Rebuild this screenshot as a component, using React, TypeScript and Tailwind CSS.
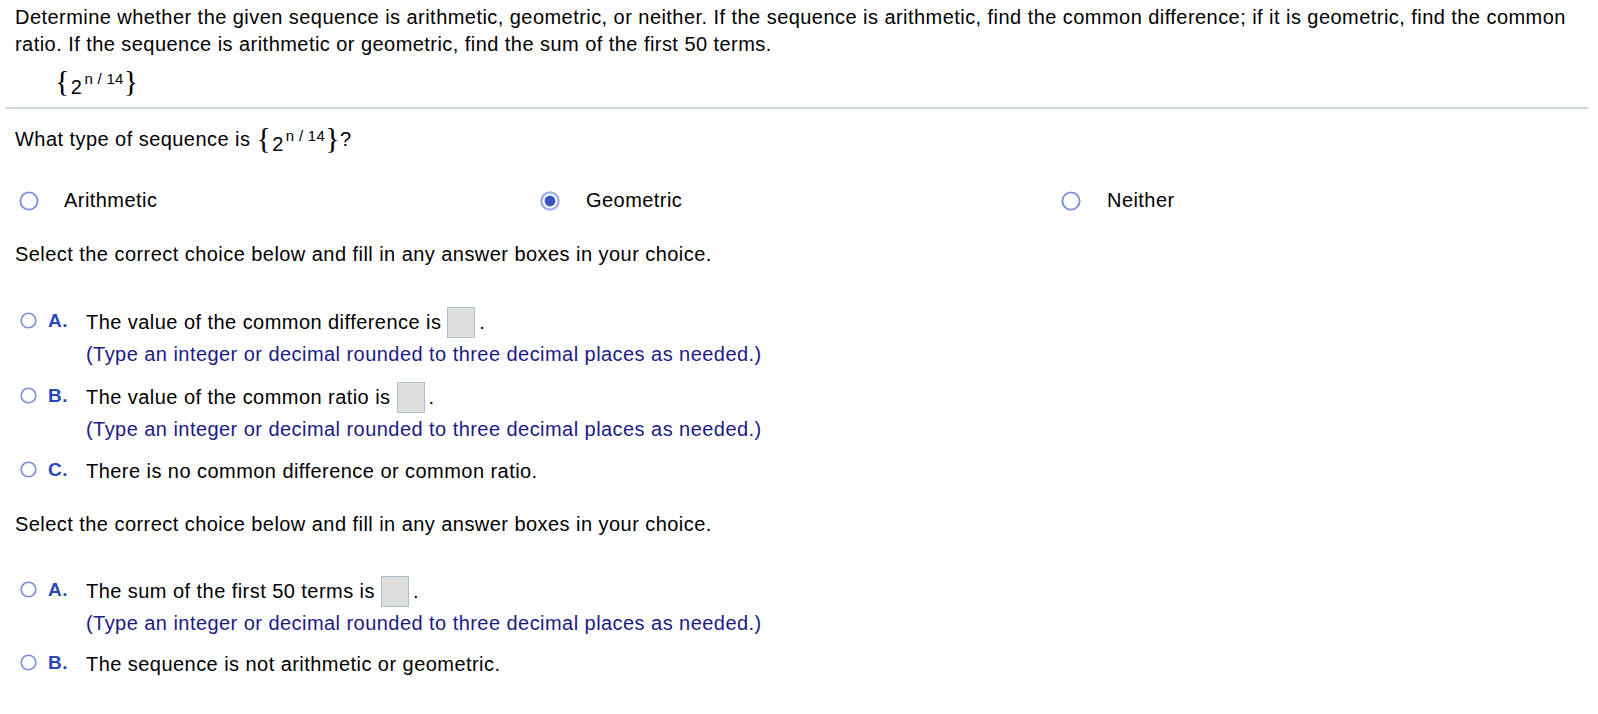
import React from "react";

function SeqMath() {
  return (
    <div className="flex h-[30px] items-center">
      <span className="font-['Liberation_Serif',serif] text-[30px] leading-[30px] -mt-[2px]">{"{"}</span>
      <span className="mt-[9px] ml-[1px] text-[20px] leading-none">2</span>
      <span className="-mt-[8px] ml-[2px] text-[15px] leading-none whitespace-pre tracking-[0.3px]">n / 14</span>
      <span className="font-['Liberation_Serif',serif] text-[30px] leading-[30px] -mt-[2px]">{"}"}</span>
    </div>
  );
}

function Radio({ checked = false, size = 16 }: { checked?: boolean; size?: number }) {
  return (
    <svg width={size} height={size} viewBox="0 0 20 20" className="shrink-0">
      <circle
        cx="10"
        cy="10"
        r="8.6"
        fill="white"
        stroke={checked ? "#9fb0ea" : "#7d8fdb"}
        strokeWidth={checked ? 2.4 : 1.9}
      />
      {checked && <circle cx="10" cy="10" r="5.4" fill="#3b52c6" />}
    </svg>
  );
}

function AnswerBox() {
  return <span className="ml-[6px] mr-[4px] inline-block h-[31px] w-[28px] border border-[#a9bfd0] bg-[#dedede]" />;
}

type ChoiceProps = {
  letter: string;
  children: React.ReactNode;
  hint?: string;
  tall?: boolean;
};

function Choice({ letter, children, hint, tall }: ChoiceProps) {
  return (
    <div className="flex pl-[5px]">
      <div className={`flex h-[27px] items-center ${tall ? "mt-[2px]" : ""}`}>
        <div className="-mt-[4px] flex items-center">
          <Radio size={17} />
          <span className="ml-[11px] w-[38px] text-[19px] font-bold leading-none text-[#2a46bb]">{letter}</span>
        </div>
      </div>
      <div>
        <div className={`flex items-center ${tall ? "h-[31px]" : "h-[27px]"}`}>{children}</div>
        {hint && <div className="mt-[3px] text-[#1b1b86]">{hint}</div>}
      </div>
    </div>
  );
}

const HINT = "(Type an integer or decimal rounded to three decimal places as needed.)";

export default function App() {
  return (
    <div className="min-h-[714px] bg-white font-['Liberation_Sans',Arial,sans-serif] text-[20px] leading-[27px] tracking-[0.45px] text-black">
      <div className="px-[15px] pt-[4px]">
        <p>
          Determine whether the given sequence is arithmetic, geometric, or neither. If the sequence is arithmetic, find
          the common difference; if it is geometric, find the common ratio. If the sequence is arithmetic or geometric,
          find the sum of the first 50 terms.
        </p>
        <div className="mt-[9px] pl-[40px]">
          <SeqMath />
        </div>
      </div>
      <div className="mx-[5px] mt-[10px] h-[2px] w-[1583px] bg-[#d3d8de]" />

      <div className="px-[15px]">
        <div className="mt-[15px] flex h-[30px] items-center">
          <span className="whitespace-pre">What type of sequence is </span>
          <SeqMath />
          <span>?</span>
        </div>

        <div className="mt-[33px] grid h-[27px] grid-cols-[521px_521px_521px]">
          <div className="flex items-center pl-[4px]">
            <Radio size={20} />
            <span className="ml-[25px]">Arithmetic</span>
          </div>
          <div className="flex items-center pl-[4px]">
            <Radio size={20} checked />
            <span className="ml-[26px]">Geometric</span>
          </div>
          <div className="flex items-center pl-[4px]">
            <Radio size={20} />
            <span className="ml-[26px]">Neither</span>
          </div>
        </div>

        <p className="mt-[27px]">Select the correct choice below and fill in any answer boxes in your choice.</p>

        <div className="mt-[39px] flex flex-col">
          <Choice letter="A." tall hint={HINT}>
            The value of the common difference is
            <AnswerBox />.
          </Choice>
          <div className="mt-[14px]">
            <Choice letter="B." tall hint={HINT}>
              The value of the common ratio is
              <AnswerBox />.
            </Choice>
          </div>
          <div className="mt-[15px]">
            <Choice letter="C.">There is no common difference or common ratio.</Choice>
          </div>
        </div>

        <p className="mt-[26px]">Select the correct choice below and fill in any answer boxes in your choice.</p>

        <div className="mt-[38px] flex flex-col gap-[14px]">
          <Choice letter="A." tall hint={HINT}>
            The sum of the first 50 terms is
            <AnswerBox />.
          </Choice>
          <Choice letter="B.">The sequence is not arithmetic or geometric.</Choice>
        </div>
      </div>
    </div>
  );
}
